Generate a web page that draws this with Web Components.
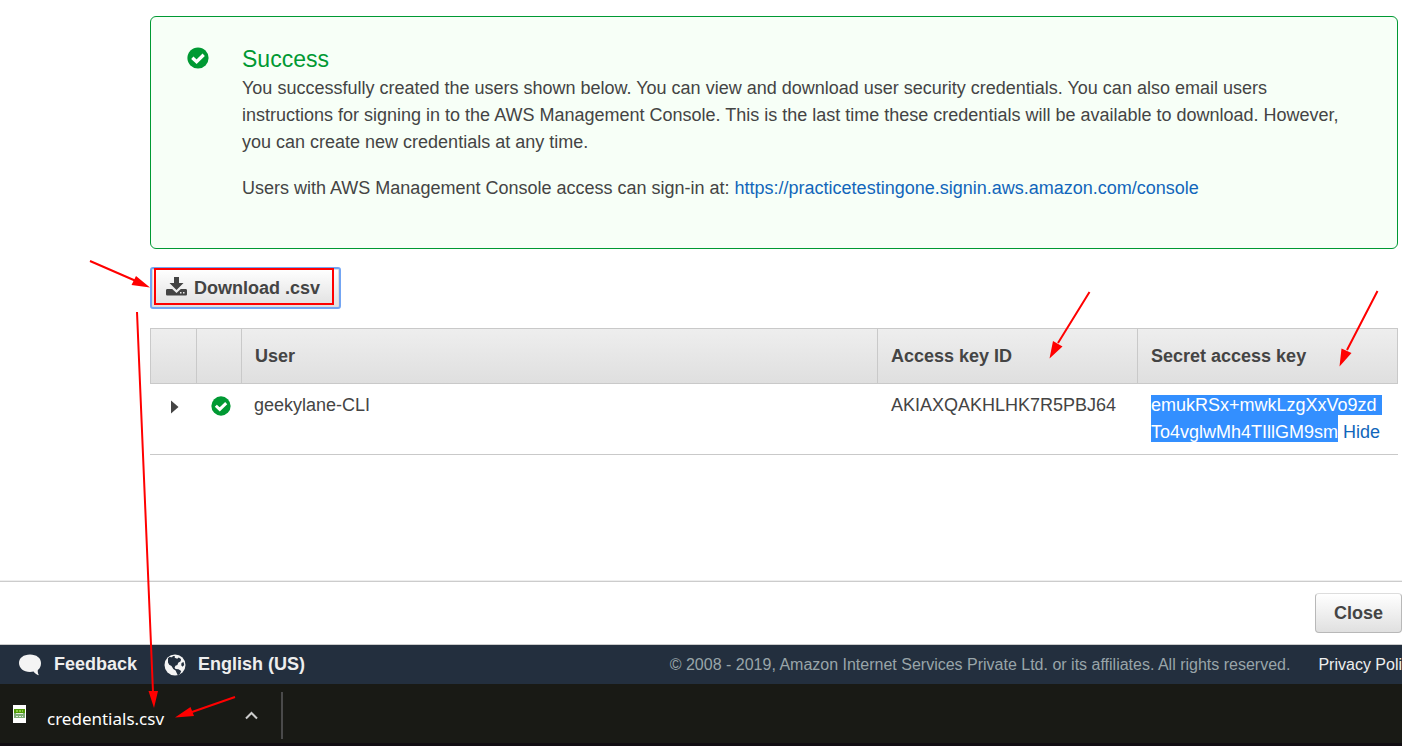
<!DOCTYPE html>
<html lang="en">
<head>
<meta charset="utf-8">
<title>Add user</title>
<style>
html, body { margin: 0; height: 100%; }
body { font: 18px/27px "Liberation Sans", Arial, sans-serif; color: #444; background: #fff; overflow: hidden; }
</style>
</head>
<body>
<console-page></console-page>
<script>
const define = (name, markup) => {
  const template = document.createElement('template');
  template.innerHTML = markup;
  customElements.define(name, class extends HTMLElement {
    constructor() {
      super();
      this.attachShadow({ mode: 'open' }).append(template.content.cloneNode(true));
    }
  });
};

define('check-icon', `
<style>:host{display:block;width:22px;height:22px} svg{display:block;width:100%;height:100%}</style>
<svg viewBox="0 0 22 22" aria-hidden="true"><circle cx="11" cy="11" r="10.6" fill="#093"/><path d="M5.3 10.7 9.6 14.7 16.7 7.800" fill="none" stroke="#fff" stroke-width="3.3"/></svg>`);

define('success-alert', `
<style>
:host{display:flex;box-sizing:border-box;padding:28px 36px 27px;border:1px solid #093;border-radius:6px;background:#f7fff7}
check-icon{flex:none;margin:2px 33px 0 0}
h2{margin:0 0 2px;font-size:23px;line-height:28px;font-weight:400;color:#093}
::slotted(p){margin:0 0 19px}
</style>
<check-icon></check-icon>
<div><h2>Success</h2><slot></slot></div>`);

define('push-button', `
<style>
:host{display:inline-block}
button{display:flex;align-items:center;gap:7px;box-sizing:border-box;height:40px;padding:0 18px;font:bold 18px/27px "Liberation Sans",Arial,sans-serif;color:#444;background:linear-gradient(#fff,#e0e0e0);border:1px solid #b8b8b8;border-top-color:#ddd;border-radius:4px}
:host([focused]) button{height:42px;padding:0 19px 0 14px;border:2px solid #73a5f3;border-radius:3px;box-shadow:inset 0 0 0 1px #ddd}
</style>
<button type="button"><slot name="icon"></slot><slot></slot></button>`);

define('user-table', `
<style>
:host{display:block}
table{width:100%;table-layout:fixed;border-spacing:0;border-collapse:separate}
th,td{box-sizing:border-box;padding:0 13px;text-align:left;vertical-align:top}
th{height:56px;vertical-align:middle;background:linear-gradient(#eee,#dfdfdf);border:solid #c9c9c9;border-width:1px 1px 1px 0}
th:first-child{border-left-width:1px}
td{height:71px;padding-top:8px;border-bottom:1px solid #c9c9c9}
td:nth-child(3){padding-left:12px}
.tick{padding:12px 14px 0}
.tick check-icon{width:20px;height:20px}
.open{padding:16px 0 0 20px}
.open button{display:block;width:10px;height:14px;padding:0;border:0;background:none}
svg{display:block}
.c1{width:47px}.c2{width:45px}.c4,.c5{width:260px}
mark{padding:0 5px 0 0;color:#fff;background:#338fff}
mark.last{padding:7px 0 0}
a{color:#1166bb;text-decoration:none}
td:last-child{white-space:nowrap}
</style>
<table>
<colgroup><col class="c1"><col class="c2"><col><col class="c4"><col class="c5"></colgroup>
<thead><tr><th></th><th></th><th>User</th><th>Access key ID</th><th>Secret access key</th></tr></thead>
<tbody><tr>
<td class="open"><button type="button" aria-label="Expand row"><svg width="10" height="14" viewBox="0 0 10 14"><path d="M1 .5 8.500 7 1 13.500z" fill="#444"/></svg></button></td>
<td class="tick"><check-icon></check-icon></td>
<td>geekylane-CLI</td><td>AKIAXQAKHLHK7R5PBJ64</td>
<td><mark>emukRSx+mwkLzgXxVo9zd</mark><br><mark class="last">To4vglwMh4TIllGM9sm</mark> <a href="#">Hide</a></td>
</tr></tbody>
</table>`);

define('action-bar', `
<style>:host{display:flex;justify-content:flex-end;box-sizing:border-box;height:64px;padding-top:11px;border-top:1px solid #ccc;border-bottom:1px solid #ccc;box-shadow:0 -1px #eee}</style>
<slot></slot>`);

define('console-footer', `
<style>
:host{display:flex;align-items:center;box-sizing:border-box;height:39px;padding:0 0 1px 18px;background:#232f3e;font-size:16px;white-space:nowrap}
a{display:flex;align-items:center;color:#eee;text-decoration:none}
.tool{gap:12px;margin-right:27px;font-size:18px;font-weight:bold}
svg{display:block;margin-top:2px}
.legal{margin-left:auto;color:#99a5a9}
.privacy{margin-left:28px}
</style>
<a class="tool" href="#"><svg width="24" height="22" viewBox="0 0 24 22" aria-hidden="true"><path d="M12 .5C5.500 .5 1 4 1 9s4.500 9 11 9c1.300 0 2.500-.1 3.600-.4 1 1.700 3 3.200 5.400 3.700-1-1.300-1.400-3.100-1.200-5.200C22 14.400 23 12 23 9c0-5-4.500-8.500-11-8.500z" fill="#f4f4f4"/></svg>Feedback</a>
<a class="tool" href="#"><svg width="22" height="22" viewBox="0 0 22 22" aria-hidden="true"><circle cx="11" cy="11" r="10.500" fill="#f4f4f4"/><path d="M4 4.300 5.500 3 8 3.200 9 2l2 .3-.3 1.500 2.500.9 1.500-1.200 2.300 1.500-.3 2.300-2.500 1.500-.8 2.200-2 .8-.8 1.900 1 1.300 2.900.2 2.700 1.900-1.200 2.700-2.100 1.800-1.200-2.600-1.100-2.500-2.300-1.600-1.800-2.900-2.300-1.200L4 8.500z" fill="#232f3e"/><path d="M17.500 9 19.500 8l.7 3-1.700 1.800-1.300-1.600z" fill="#232f3e"/></svg>English (US)</a>
<span class="legal">© 2008 - 2019, Amazon Internet Services Private Ltd. or its affiliates. All rights reserved.</span>
<a class="privacy" href="#">Privacy Poli</a>`);

define('download-shelf', `
<style>
:host{display:flex;align-items:center;box-sizing:border-box;height:62px;padding:4px 0 0 13px;background:#191a15;color:#fff;font:17px/24px "Noto Sans","Open Sans",sans-serif;border-bottom:3px solid #110d12}
svg{display:block}
.item{display:flex;align-items:center;box-sizing:border-box;width:270px;height:47px;padding-right:23px;border-right:2px solid #4a4a4a}
.file{margin:0 21px 4px 0}
.name{margin-top:6px}
button{margin-left:auto;padding:0;border:0;background:none}
</style>
<div class="item">
<svg class="file" width="13" height="18" viewBox="0 0 13 18" aria-hidden="true"><path d="M0 0h13v18H0z" fill="#fff"/><path d="M1 4h11v4H1z" fill="#4e9a06"/><path d="M1 8h11v5H1z" fill="#7fae76"/><path d="M3 5h2v2H3zM6 5h2v2H6zM9 5h1v2H9z" fill="#8bcb43"/><path d="M3 8h7v1H3zM3 11h2v1H3zM6 11h2v1H6zM9 11h1v1H9z" fill="#e4eedf"/></svg>
<span class="name">credentials.csv</span>
<button type="button" aria-label="More options"><svg width="13" height="9" viewBox="0 0 13 9"><path d="M1 7.500 6.500 2 12 7.500" fill="none" stroke="#ccc" stroke-width="2"/></svg></button>
</div>`);

define('markup-arrows', `
<style>:host{position:absolute;top:0;left:0;pointer-events:none} svg{display:block}</style>
<svg width="1402" height="746" viewBox="0 0 1402 746" aria-hidden="true">
<g fill="none" stroke="#f00" stroke-width="2">
<path d="M155 269h178v35H155z"/>
<path d="M90 261 136 281M137 312 153 692M235 697 192 712M1089.500 292 1058 343M1377.500 291 1347 350"/>
</g>
<path d="M150 287.500 131.500 285 136 276zM154 708 148.500 691H158zM175 717.500 190.500 707 194 716zM1049.500 358.500 1053 341 1062.500 346.500zM1339.500 366.500 1341.500 348.500 1351.500 353z" fill="#f00"/>
</svg>`);

define('console-page', `
<style>
:host{display:flex;flex-direction:column;min-height:100vh}
main{flex:1;padding:16px 4px 0 150px}
.tools{display:flex;margin:18px 0 19px}
.link{color:#1166bb;text-decoration:none}
.dl{display:block;margin-bottom:2px}
</style>
<main>
<success-alert>
<p>You successfully created the users shown below. You can view and download user security credentials. You can also email users instructions for signing in to the AWS Management Console. This is the last time these credentials will be available to download. However, you can create new credentials at any time.</p>
<p>Users with AWS Management Console access can sign-in at: <a class="link" href="#">https://practicetestingone.signin.aws.amazon.com/console</a></p>
</success-alert>
<div class="tools"><push-button focused><svg class="dl" slot="icon" width="21" height="20" viewBox="0 0 21 20" aria-hidden="true"><path d="M8 0h5v6h4.500L10.500 13 3.500 6H8z" fill="#444"/><path fill-rule="evenodd" d="M1.500 12h4.700l4.300 4 4.300-4h4.700c1 0 1.500.5 1.500 1.500V17c0 1-.5 1.500-1.500 1.500h-18C.5 18.500 0 18 0 17v-3.500C0 12.500.5 12 1.500 12zM14 15v1.500h1.500V15zM17 15v1.500h1.500V15z" fill="#444"/></svg>Download .csv</push-button></div>
<user-table></user-table>
</main>
<action-bar><push-button>Close</push-button></action-bar>
<console-footer></console-footer>
<download-shelf></download-shelf>
<markup-arrows></markup-arrows>`);
</script>
</body>
</html>
